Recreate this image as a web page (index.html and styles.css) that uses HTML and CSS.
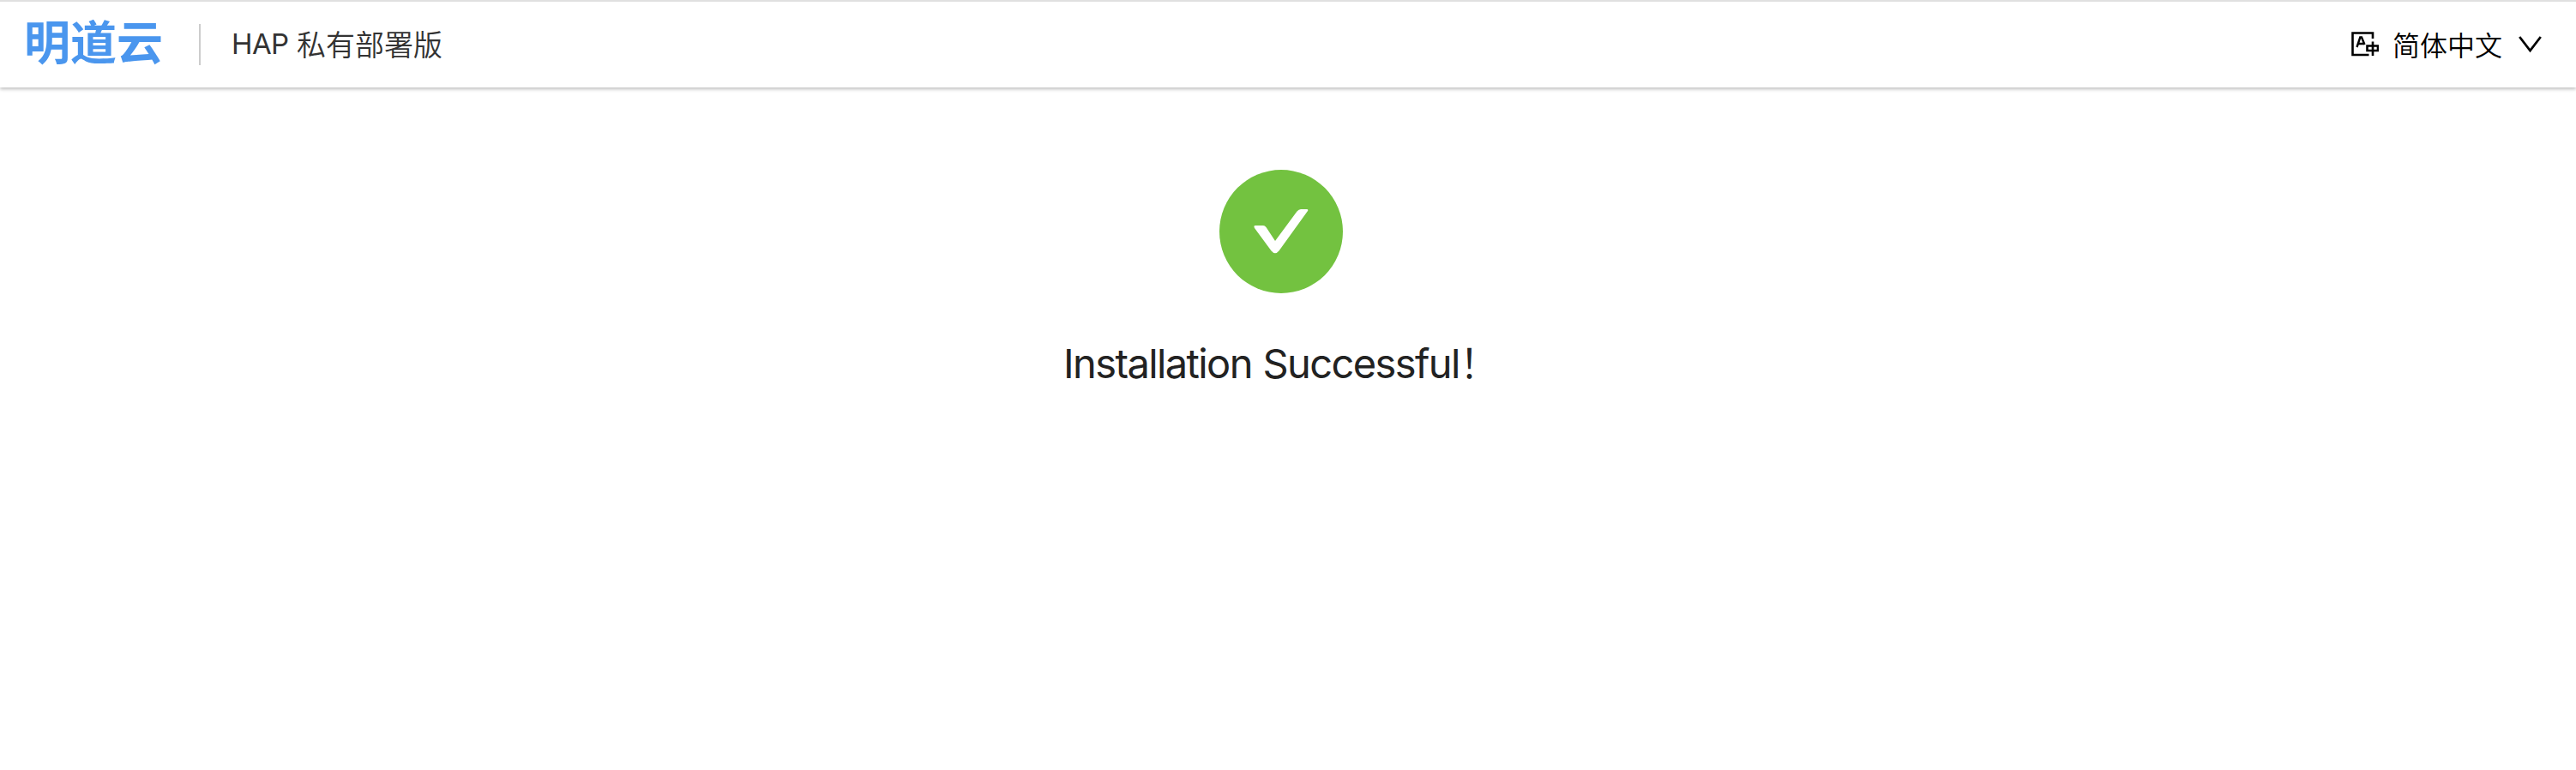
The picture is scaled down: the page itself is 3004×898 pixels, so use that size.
FILE: index.html
```html
<!DOCTYPE html>
<html lang="zh-CN">
<head>
<meta charset="utf-8">
<title>HAP 私有部署版</title>
<link rel="stylesheet" href="styles.css">
</head>
<body>
<header class="topbar">
  <div class="brand">明道云</div>
  <div class="divider"></div>
  <div class="product"><span class="latin">HAP</span><span>私有部署版</span></div>
  <div class="language">
    <svg class="lang-icon" width="32" height="30" viewBox="0 0 32 30" fill="none" stroke="#000">
      <path d="M25 8V1.5H1.5V27H20.500" stroke-width="2.6"/>
      <path d="M6.500 18L10.300 6.500H12L15.500 15M8 14H14.500" stroke-width="2.4"/>
      <path d="M18.500 16.500H31V22H18.500ZM25 11.500V28" stroke-width="2.6"/>
    </svg>
    <span class="lang-name">简体中文</span>
    <svg class="chevron" width="27" height="20" viewBox="0 0 27 20" fill="none" stroke="#000" stroke-width="2.8">
      <path d="M1.200 1L13.500 17L25.800 1"/>
    </svg>
  </div>
</header>
<main class="result">
  <svg class="success" width="144" height="144" viewBox="0 0 144 144">
    <circle cx="72" cy="72" r="72" fill="#73c240"/>
    <path fill="#fff" d="M42 65H51Q53 65 54.500 67L65 83L90.500 48.500Q92.500 46 95 46H102Q104 46 103 48L69.500 94.500Q65 100 60.500 94.500L41 68Q39.500 65 42 65Z"/>
  </svg>
  <h1 class="title">Installation Successful<span class="mark">！</span></h1>
</main>
</body>
</html>
```
FILE: styles.css
```css
* { box-sizing: border-box; }
body {
  margin: 0;
  height: 898px;
  background: #fff;
  font-family: Inter, "Noto Sans CJK SC", sans-serif;
  overflow: hidden;
}
.topbar {
  display: flex;
  align-items: center;
  height: 102px;
  padding: 0 40px 0 28px;
  border-top: 2px solid #e0e0e0;
  box-shadow: 0 2px 4px rgba(0, 0, 0, 0.26);
}
.brand {
  width: 204px;
  padding-bottom: 10px;
  color: #4a96ee;
  font: 700 54px/80px "Noto Sans CJK SC", sans-serif;
  white-space: nowrap;
}
.divider {
  width: 2px;
  height: 48px;
  background: #ccc;
}
.product {
  display: flex;
  gap: 9px;
  margin-left: 36px;
  padding-bottom: 2px;
  color: #333;
  font: 350 34px/50px "Noto Sans CJK SC", sans-serif;
}
.latin {
  width: 67px;
  font-family: Inter, sans-serif;
  font-weight: 400;
  font-size: 33px;
  letter-spacing: -0.6px;
}
.language {
  display: flex;
  align-items: center;
  margin-left: auto;
  color: #000;
}
.lang-name {
  margin: 0 19px 0 16px;
  padding-bottom: 3px;
  font: 350 32px/48px "Noto Sans CJK SC", sans-serif;
}
.result {
  display: flex;
  flex-direction: column;
  align-items: center;
  padding: 96px 16px 0 0;
}
.success { display: block; }
.title {
  display: flex;
  width: 508px;
  margin: 46px 0 0;
  color: #222;
  font: 400 47px/72px Inter, sans-serif;
  letter-spacing: -1.6px;
  word-spacing: 1px;
  white-space: nowrap;
}
.mark {
  font-family: "Noto Sans CJK SC", sans-serif;
  font-weight: 350;
  line-height: 66px;
}
```
